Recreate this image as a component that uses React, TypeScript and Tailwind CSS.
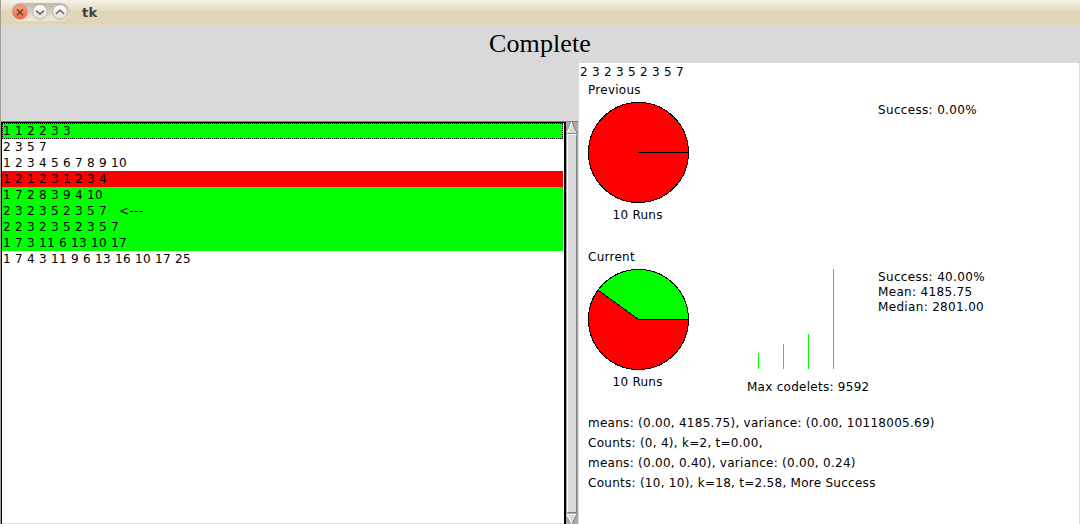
import React from "react";

const problems = [
  { text: "1 1 2 2 3 3", tone: "bg-[#00ff00]" },
  { text: "2 3 5 7", tone: "bg-white" },
  { text: "1 2 3 4 5 6 7 8 9 10", tone: "bg-white" },
  { text: "1 2 1 2 3 1 2 3 4", tone: "bg-[#ff0000]" },
  { text: "1 7 2 8 3 9 4 10", tone: "bg-[#00ff00]" },
  { text: "2 3 2 3 5 2 3 5 7   <---", tone: "bg-[#00ff00]" },
  { text: "2 2 3 2 3 5 2 3 5 7", tone: "bg-[#00ff00]" },
  { text: "1 7 3 11 6 13 10 17", tone: "bg-[#00ff00]" },
  { text: "1 7 4 3 11 9 6 13 16 10 17 25", tone: "bg-white" },
];

function WindowButton({ kind }: { kind: "close" | "min" | "max" }) {
  const close = kind === "close";
  return (
    <svg className="block h-4 w-4" viewBox="0 0 16 16">
      <defs>
        <linearGradient id={"g" + kind} x1="0" y1="0" x2="0" y2="1">
          <stop offset="0" stopColor={close ? "#f9a385" : "#ffffff"} />
          <stop offset="1" stopColor={close ? "#f4683a" : "#e2ded5"} />
        </linearGradient>
      </defs>
      <circle cx="8" cy="8" r="7.3" fill={`url(#g${kind})`} stroke={close ? "#c98065" : "#b0a89b"} strokeWidth="0.7" />
      {kind === "close" && <path d="M5 5.2l6 6M11 5.2l-6 6" stroke="#65463a" strokeWidth="1.6" />}
      {kind === "min" && <path d="M4 6.6L8 10l4-3.4" fill="none" stroke="#77736c" strokeWidth="1.8" />}
      {kind === "max" && <path d="M4 9.8L8 6.2l4 3.6" fill="none" stroke="#77736c" strokeWidth="1.8" />}
    </svg>
  );
}

function TitleBar() {
  return (
    <div className="flex h-[25px] shrink-0 items-start bg-linear-to-b from-[#f6f2e6] from-0% via-[#e0d6ba] via-50% to-[#dfd5b6] pl-[10px]">
      <div className="mt-[3px] flex h-[18px] w-[59px] items-center gap-1 rounded-full bg-linear-to-b from-[#c3b9aa] to-[#eee8dc] pl-px">
        <WindowButton kind="close" />
        <WindowButton kind="min" />
        <WindowButton kind="max" />
      </div>
      <span className="ml-3 mt-[5px] text-[13px] leading-4 font-bold text-[#3c3c3c]">tk</span>
    </div>
  );
}

function ScrollBar() {
  return (
    <div className="flex w-[13px] shrink-0 flex-col items-center border-t border-r border-t-[#828282] border-r-[#d9d9d9] bg-[#a9a9a9]">
      <svg className="block h-3 w-[10px] shrink-0" viewBox="0 0 10 12" shapeRendering="crispEdges">
        <path d="M5 0L10 12H0z" fill="#d9d9d9" />
        <path d="M5 0L0 12" stroke="#fff" />
        <path d="M5 0L10 11.5H0" fill="none" stroke="#828282" />
      </svg>
      <div className="w-[10px] flex-1 border border-t-white border-l-white border-r-[#828282] border-b-[#828282] bg-[#d9d9d9]" />
      <svg className="mt-px block h-[10px] w-[10px] shrink-0" viewBox="0 0 10 10" shapeRendering="crispEdges">
        <path d="M0 0h10L5 10z" fill="#d9d9d9" />
        <path d="M5 10L0 .5h10" fill="none" stroke="#fff" />
        <path d="M10 0L5 10" stroke="#828282" />
      </svg>
    </div>
  );
}

function Pie({ green }: { green: boolean }) {
  return (
    <svg className="block h-[103px] w-[103px]" viewBox="0 0 103 103" shapeRendering="crispEdges">
      <circle cx="51.5" cy="51.5" r="50" fill="#ff0000" />
      {green && <path d="M51.5 51.5H101.5A50 50 0 0 0 11.05 22.11z" fill="#00ff00" />}
      <circle cx="51.5" cy="51.5" r="50" fill="none" stroke="#000" />
      <path d={green ? "M101.5 51.5H51.5L11.05 22.11" : "M51 51.5H102"} fill="none" stroke="#000" />
    </svg>
  );
}

function Section({ title, stats, chart }: { title: string; stats: string[]; chart: boolean }) {
  return (
    <section className="h-[167px] shrink-0">
      <div className="h-5 pl-[9px] leading-[18px]">{title}</div>
      <div className="flex pl-2">
        <div className="w-[103px]">
          <Pie green={chart} />
          <div className="mt-[3px] pl-[25.5px] leading-4">10 Runs</div>
        </div>
        <div className="ml-[57px] w-[131px]">
          {chart && (
            <>
              <svg className="block h-[103px] w-[131px]" viewBox="0 0 131 103" shapeRendering="crispEdges">
                <path d="M11.5 85v16M36.5 76v25M61.5 66v35M86.5 1v100" stroke="#00ff00" />
              </svg>
              <div className="mt-2 leading-4">Max codelets: 9592</div>
            </>
          )}
        </div>
        <div className="pt-0.5 leading-[15px] tracking-[0.33px]">
          {stats.map((s) => (
            <div key={s}>{s}</div>
          ))}
        </div>
      </div>
    </section>
  );
}

export default function App() {
  return (
    <div className="flex h-[524px] w-[1080px] flex-col overflow-hidden border-l border-[#a39d92] bg-[#d9d9d9] font-['DejaVu_Sans',sans-serif] text-[12px] tracking-[0.27px] whitespace-pre text-black">
      <TitleBar />
      <div className="h-[38px] shrink-0 pr-px text-center font-['Liberation_Serif',serif] text-[26px] leading-[37px] tracking-[0.12px]">
        Complete
      </div>
      <div className="flex min-h-0 flex-1">
        <div className="flex w-[578px] shrink-0 pt-[58px]">
          <div className="flex w-[565px] border-t border-[#828282]">
            <div className="flex flex-1 flex-col border-t border-r-2 border-l border-black bg-white tracking-[0.365px] [word-spacing:-0.18px]">
              {problems.map((p, i) => (
                <div
                  key={p.text}
                  className={`mr-px h-4 shrink-0 pl-px leading-4 ${p.tone} ${i === 0 ? "outline-1 -outline-offset-1 outline-dotted outline-black" : ""}`}
                >
                  {p.text}
                </div>
              ))}
              <div className="flex-1" />
              <div className="h-px bg-[#d9d9d9]" />
            </div>
          </div>
          <ScrollBar />
        </div>
        <main className="flex min-w-0 flex-1 flex-col border-r border-[#d9d9d9] bg-white">
          <div className="h-[18px] shrink-0 pl-px leading-[18px] tracking-[0.365px] [word-spacing:-0.18px]">2 3 2 3 5 2 3 5 7</div>
          <Section title="Previous" stats={["Success: 0.00%"]} chart={false} />
          <Section title="Current" stats={["Success: 40.00%", "Mean: 4185.75", "Median: 2801.00"]} chart />
          <div className="-mt-0.5 pl-[9px] leading-5">
            <div>means: (0.00, 4185.75), variance: (0.00, 10118005.69)</div>
            <div>Counts: (0, 4), k=2, t=0.00,</div>
            <div>means: (0.00, 0.40), variance: (0.00, 0.24)</div>
            <div>Counts: (10, 10), k=18, t=2.58, More Success</div>
          </div>
        </main>
      </div>
    </div>
  );
}
